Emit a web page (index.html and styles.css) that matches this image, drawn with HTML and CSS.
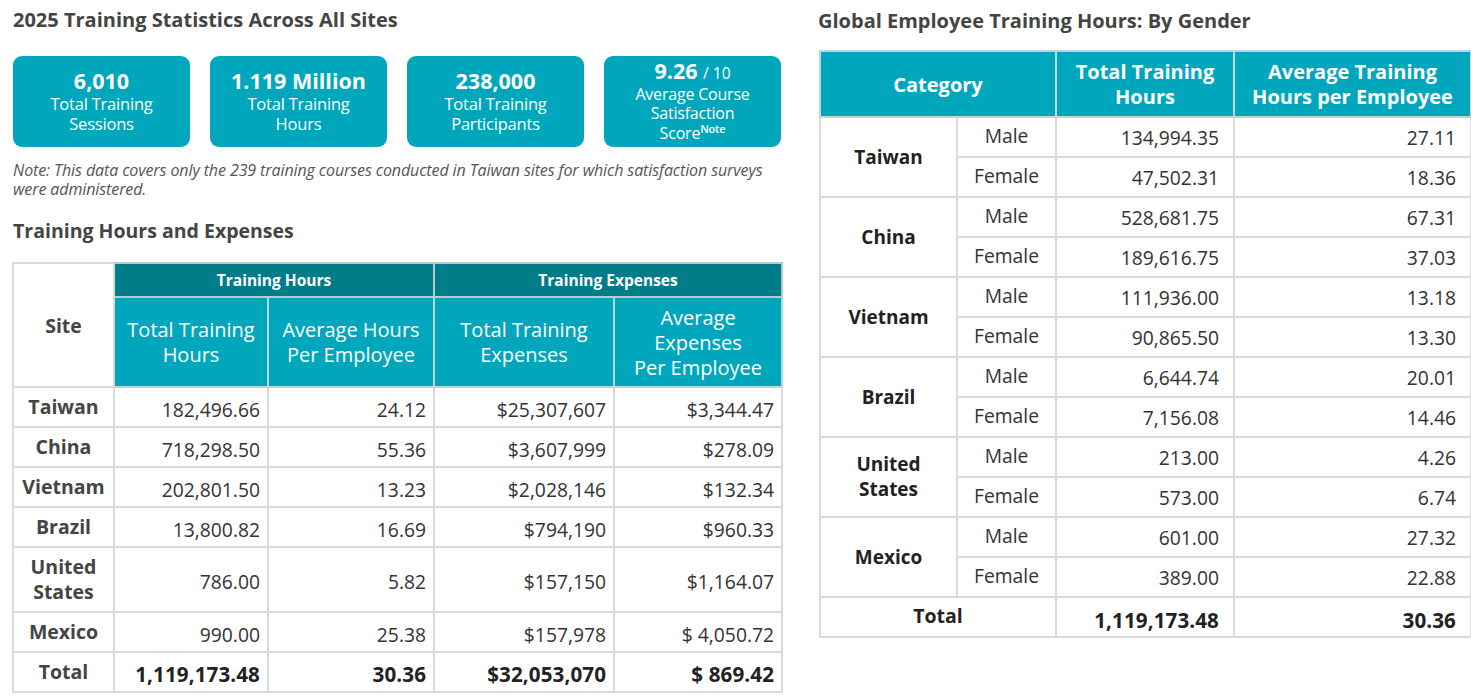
FILE: index.html
```html
<!DOCTYPE html>
<html lang="en">
<head>
<meta charset="utf-8">
<title>2025 Training Statistics</title>
<link rel="stylesheet" href="styles.css">
</head>
<body>
<div class="page">
  <section class="left">
    <h1 class="title">2025 Training Statistics Across All Sites</h1>
    <div class="cards">
      <div class="card"><div class="num">6,010</div><div class="lbl">Total Training<br>Sessions</div></div>
      <div class="card"><div class="num">1.119 Million</div><div class="lbl">Total Training<br>Hours</div></div>
      <div class="card"><div class="num">238,000</div><div class="lbl">Total Training<br>Participants</div></div>
      <div class="card card-tight"><div class="num">9.26 <span class="of">/ 10</span></div><div class="lbl">Average Course<br>Satisfaction<br>Score<sup>Note</sup></div></div>
    </div>
    <p class="note">Note: This data covers only the 239 training courses conducted in Taiwan sites for which satisfaction surveys were administered.</p>
    <h2 class="subtitle">Training Hours and Expenses</h2>
    <table class="t1">
      <colgroup>
        <col class="c-site"><col class="c-th"><col class="c-ah"><col class="c-te"><col class="c-ae">
      </colgroup>
      <thead>
        <tr class="hr1">
          <th rowspan="2" class="site-h">Site</th>
          <th colspan="2" class="grp">Training Hours</th>
          <th colspan="2" class="grp">Training Expenses</th>
        </tr>
        <tr class="hr2">
          <th>Total Training<br>Hours</th>
          <th>Average Hours<br>Per Employee</th>
          <th>Total Training<br>Expenses</th>
          <th>Average<br>Expenses<br>Per Employee</th>
        </tr>
      </thead>
      <tbody>
        <tr><th>Taiwan</th><td>182,496.66</td><td>24.12</td><td>$25,307,607</td><td>$3,344.47</td></tr>
        <tr><th>China</th><td>718,298.50</td><td>55.36</td><td>$3,607,999</td><td>$278.09</td></tr>
        <tr><th>Vietnam</th><td>202,801.50</td><td>13.23</td><td>$2,028,146</td><td>$132.34</td></tr>
        <tr><th>Brazil</th><td>13,800.82</td><td>16.69</td><td>$794,190</td><td>$960.33</td></tr>
        <tr class="tall"><th>United<br>States</th><td>786.00</td><td>5.82</td><td>$157,150</td><td>$1,164.07</td></tr>
        <tr><th>Mexico</th><td>990.00</td><td>25.38</td><td>$157,978</td><td>$ 4,050.72</td></tr>
        <tr class="total"><th>Total</th><td>1,119,173.48</td><td>30.36</td><td>$32,053,070</td><td>$ 869.42</td></tr>
      </tbody>
    </table>
  </section>
  <section class="right">
    <h2 class="title2">Global Employee Training Hours: By Gender</h2>
    <table class="t2">
      <colgroup>
        <col class="c-country"><col class="c-gender"><col class="c-hours"><col class="c-avg">
      </colgroup>
      <thead>
        <tr>
          <th colspan="2">Category</th>
          <th>Total Training<br>Hours</th>
          <th>Average Training<br>Hours per Employee</th>
        </tr>
      </thead>
      <tbody>
        <tr><th rowspan="2">Taiwan</th><td class="g">Male</td><td>134,994.35</td><td>27.11</td></tr>
        <tr><td class="g">Female</td><td>47,502.31</td><td>18.36</td></tr>
        <tr><th rowspan="2">China</th><td class="g">Male</td><td>528,681.75</td><td>67.31</td></tr>
        <tr><td class="g">Female</td><td>189,616.75</td><td>37.03</td></tr>
        <tr><th rowspan="2">Vietnam</th><td class="g">Male</td><td>111,936.00</td><td>13.18</td></tr>
        <tr><td class="g">Female</td><td>90,865.50</td><td>13.30</td></tr>
        <tr><th rowspan="2">Brazil</th><td class="g">Male</td><td>6,644.74</td><td>20.01</td></tr>
        <tr><td class="g">Female</td><td>7,156.08</td><td>14.46</td></tr>
        <tr><th rowspan="2">United<br>States</th><td class="g">Male</td><td>213.00</td><td>4.26</td></tr>
        <tr><td class="g">Female</td><td>573.00</td><td>6.74</td></tr>
        <tr><th rowspan="2">Mexico</th><td class="g">Male</td><td>601.00</td><td>27.32</td></tr>
        <tr><td class="g">Female</td><td>389.00</td><td>22.88</td></tr>
        <tr class="total"><th colspan="2">Total</th><td>1,119,173.48</td><td>30.36</td></tr>
      </tbody>
    </table>
  </section>
</div>
</body>
</html>
```

FILE: styles.css
```css
* { box-sizing: border-box; }
html, body { margin: 0; padding: 0; background: #fff; }
body {
  font-family: "Open Sans", "Noto Sans", "DejaVu Sans", sans-serif;
  color: #333;
}
.page {
  display: flex;
  align-items: flex-start;
  width: 1471px;
  height: 697px;
  overflow: hidden;
}
.left {
  width: 781px;
  padding-left: 13px;
}
.right {
  margin-left: 37px;
  width: 652px;
}
.title {
  margin: 6px 0 0 0;
  font-size: 20px;
  line-height: 28px;
  font-weight: 700;
  color: #444;
}
.cards {
  display: flex;
  gap: 20px;
  margin-top: 22px;
}
.card {
  width: 177px;
  height: 91px;
  background: #00a7bc;
  border-radius: 9px;
  color: #fff;
  text-align: center;
  display: flex;
  flex-direction: column;
  justify-content: center;
  padding-bottom: 2px;
}
.card .num {
  font-size: 21.5px;
  font-weight: 700;
  line-height: 26px;
}
.card .lbl {
  font-size: 16.5px;
  line-height: 20px;
  letter-spacing: -0.2px;
}
.card-tight { padding-bottom: 0; }
.card-tight .num { line-height: 22px; }
.card-tight .lbl { font-size: 16px; line-height: 19.5px; margin-top: 1px; }
.card .of {
  font-size: 15.5px;
  font-weight: 400;
}
.card sup {
  font-size: 11px;
  line-height: 0;
  vertical-align: 6px;
  font-weight: 600;
}
.note {
  margin: 14px 0 0 0;
  font-size: 16px;
  line-height: 19px;
  font-style: italic;
  color: #555;
  width: 768px;
  letter-spacing: -0.1px;
}
.subtitle {
  margin: 19px 0 0 0;
  font-size: 19.5px;
  line-height: 26px;
  font-weight: 700;
  color: #444;
}
.t1, .t2 {
  border-collapse: collapse;
  table-layout: fixed;
}
.t1 {
  margin-top: 18px;
  width: 769px;
  margin-left: -1px;
}
.t1 td, .t1 th, .t2 td, .t2 th {
  border: 2px solid #dadada;
  padding: 0 7px;
}
.c-site { width: 101px; }
.c-th { width: 154px; }
.c-ah { width: 166px; }
.c-te { width: 180px; }
.c-ae { width: 168px; }
.t1 thead th {
  color: #fff;
  font-weight: 400;
  text-align: center;
}
.t1 .hr1 { height: 34px; }
.t1 .hr1 .grp {
  background: #007d89;
  font-size: 15.5px;
  font-weight: 700;
  border-color: #b9c9cc;
}
.t1 .site-h {
  background: #fff;
  color: #444;
  font-weight: 700;
  font-size: 19.5px;
}
.t1 .hr2 { height: 90px; }
.t1 .hr2 th {
  background: #00a7bc;
  font-size: 20px;
  line-height: 25px;
  border-color: #b9d8dd;
  padding: 0 4px;
}
.t1 tbody tr { height: 40px; }
.t1 tbody tr.tall { height: 65px; }
.t1 tbody th {
  font-size: 19.5px;
  font-weight: 700;
  color: #444;
  line-height: 25px;
  text-align: center;
  padding: 0 4px 2px 4px;
}
.t1 tbody td {
  font-size: 19.3px;
  text-align: right;
  color: #333;
  padding-top: 4px;
}
.t1 tr.total td {
  font-weight: 700;
  color: #222;
  font-size: 20.6px;
  letter-spacing: 0.1px;
}
.title2 {
  margin: 8px 0 0 0;
  font-size: 20px;
  line-height: 26px;
  font-weight: 700;
  color: #444;
}
.t2 {
  margin-top: 16px;
  margin-left: 1px;
  width: 651px;
}
.c-country { width: 137px; }
.c-gender { width: 99px; }
.c-hours { width: 178px; }
.c-avg { width: 237px; }
.t2 thead tr { height: 66px; }
.t2 thead th {
  background: #00a7bc;
  color: #fff;
  font-size: 20px;
  font-weight: 700;
  line-height: 25px;
  text-align: center;
  border-color: #c2d6d9;
  padding: 0 4px;
}
.t2 tbody tr { height: 40px; }
.t2 tbody th {
  font-size: 19px;
  font-weight: 700;
  color: #222;
  line-height: 25px;
  text-align: center;
}
.t2 tbody td {
  font-size: 19.3px;
  color: #333;
  text-align: right;
  padding-right: 14px;
}
.t2 tbody td.g {
  text-align: center;
  padding: 0 4px 4px 4px;
}
.t2 tr.total th, .t2 tr.total td {
  font-weight: 700;
  color: #222;
}
.t2 tr.total td { padding-top: 6px; font-size: 20.6px; letter-spacing: 0.1px; }
.t2 tr.total th { padding-bottom: 4px; font-size: 19.5px; }
```
